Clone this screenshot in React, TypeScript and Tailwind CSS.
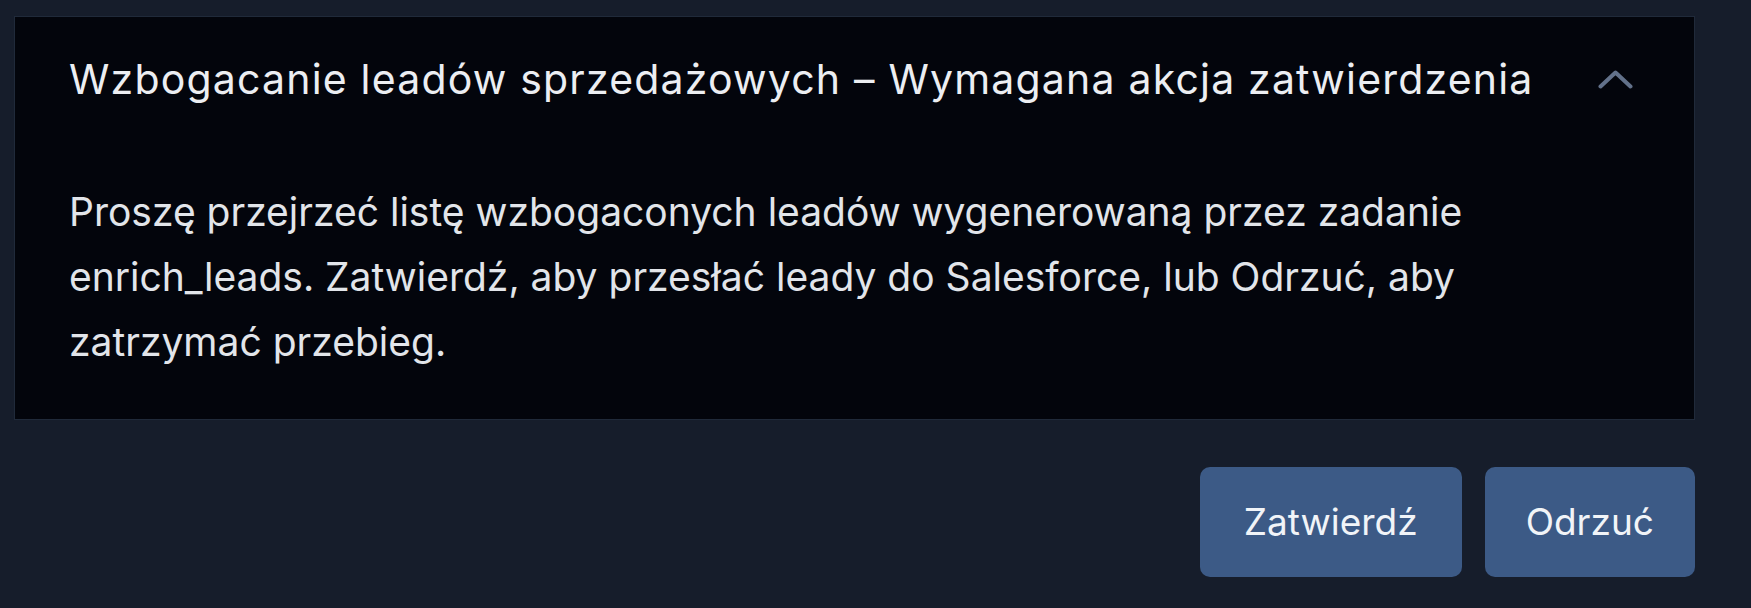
import { useState } from "react";

const task = {
  title: "Wzbogacanie leadów sprzedażowych – Wymagana akcja zatwierdzenia",
  body: "Proszę przejrzeć listę wzbogaconych leadów wygenerowaną przez zadanie enrich_leads. Zatwierdź, aby przesłać leady do Salesforce, lub Odrzuć, aby zatrzymać przebieg.",
};

const Chevron = ({ open }: { open: boolean }) => (
  <svg
    width="35"
    height="19"
    viewBox="0 0 35 19"
    fill="none"
    className={open ? "" : "rotate-180"}
  >
    <polyline
      points="2.5,16.5 17.5,2.5 32.5,16.5"
      stroke="#62718a"
      strokeWidth="4"
      strokeLinecap="round"
      strokeLinejoin="round"
    />
  </svg>
);

export default function App() {
  const [open, setOpen] = useState(true);

  return (
    <div
      className="min-h-[608px] w-full bg-[#161d2b] pt-[16px] pl-[14px] pr-[56px] pb-[31px]"
      style={{ fontFamily: "Inter, 'Liberation Sans', sans-serif" }}
    >
      <div className="w-full border border-[#202a3a] bg-[#03050c] mr-[2px]">
        <button
          type="button"
          onClick={() => setOpen(!open)}
          className="flex w-full items-center justify-between pl-[54px] pr-[61px] pt-[38px] text-left"
        >
          <h2 className="text-[41px] leading-[48px] tracking-[0.029em] text-[#eceef2]">
            {task.title}
          </h2>
          <span className="mt-[1px]">
            <Chevron open={open} />
          </span>
        </button>
        {open && (
          <p className="pl-[54px] pr-[200px] pt-[76px] pb-[45px] text-[39px] leading-[65px] text-[#e2e5ea]">
            {task.body}
          </p>
        )}
      </div>

      <div className="mt-[47px] flex justify-end gap-[23px]">
        <button
          type="button"
          className="h-[110px] rounded-[10px] bg-[#3c5a86] px-[44px] text-[37px] text-[#f1f4f8]"
        >
          Zatwierdź
        </button>
        <button
          type="button"
          className="h-[110px] rounded-[10px] bg-[#3c5a86] px-[41px] text-[37px] text-[#f1f4f8]"
        >
          Odrzuć
        </button>
      </div>
    </div>
  );
}
